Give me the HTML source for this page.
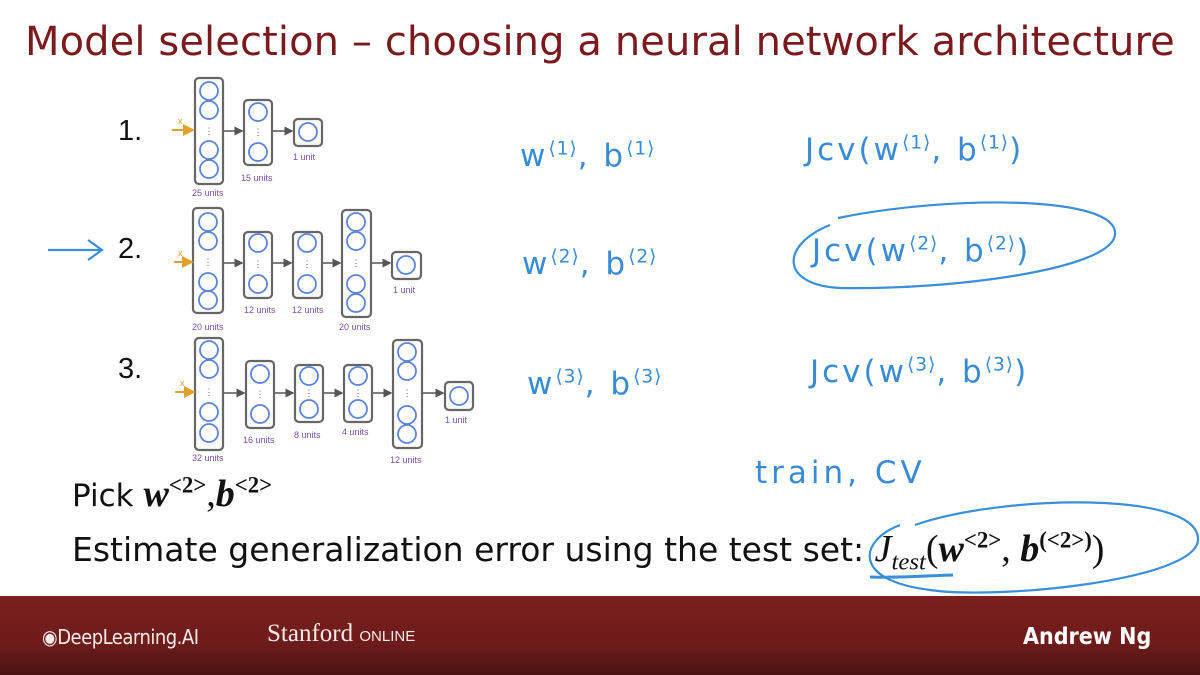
<!DOCTYPE html>
<html><head><meta charset="utf-8"><style>
body{margin:0;width:1200px;height:675px;overflow:hidden;background:#fff;position:relative;font-family:"Liberation Sans",sans-serif}
.a{position:absolute;white-space:nowrap}
.t{left:25px;top:19px;font-size:40px;color:#7a1a1c;font-family:"DejaVu Sans",sans-serif;letter-spacing:0.1px}
.n{font-size:29px;color:#111}
.hw{color:#3a8bd6;font-family:"DejaVu Sans",sans-serif;font-weight:normal;font-size:31px;letter-spacing:3px}
.hw sup{font-family:"DejaVu Sans";font-weight:normal;font-size:60%;letter-spacing:1px}
.m{font-family:"Liberation Serif",serif;font-weight:bold;font-style:italic}
sup{font-size:60%;font-family:"Liberation Serif",serif;font-style:normal;font-weight:bold}
.ft{left:0;top:596px;width:1200px;height:79px;background:linear-gradient(#7a1f1d 0%,#6e1c1a 60%,#4a1414 100%)}
.b{font-family:"DejaVu Sans",sans-serif;font-size:33px;color:#111}
.mt{font-size:38px;font-family:'Liberation Serif',serif}
</style></head><body>
<div class="a t">Model selection – choosing a neural network architecture</div>
<div class="a n" style="left:118px;top:115px">1.</div>
<div class="a n" style="left:118px;top:233px">2.</div>
<div class="a n" style="left:118px;top:353px">3.</div>
<svg class="a" style="left:0;top:0" width="1200" height="600">
<defs><marker id="ar" markerWidth="6" markerHeight="6" refX="5" refY="3" orient="auto"><path d="M0,0L6,3L0,6z" fill="#555"/></marker>
<marker id="ao" markerWidth="6" markerHeight="6" refX="5" refY="3" orient="auto"><path d="M0,0L6,3L0,6z" fill="#e0a030"/></marker></defs>
<g fill="none" stroke="#666" stroke-width="2.2">
<rect x="195" y="78" width="28" height="106" rx="4"/><rect x="244" y="100" width="28" height="65" rx="4"/><rect x="294" y="119" width="28" height="27" rx="4"/>
<rect x="193" y="208" width="30" height="105" rx="4"/><rect x="244" y="232" width="28" height="66" rx="4"/><rect x="293" y="232" width="29" height="66" rx="4"/><rect x="342" y="210" width="29" height="107" rx="4"/><rect x="392" y="252" width="29" height="27" rx="4"/>
<rect x="195" y="338" width="28" height="112" rx="4"/><rect x="246" y="361" width="28" height="67" rx="4"/><rect x="295" y="365" width="28" height="57" rx="4"/><rect x="344" y="365" width="28" height="57" rx="4"/><rect x="393" y="340" width="29" height="108" rx="4"/><rect x="445" y="382" width="28" height="28" rx="4"/>
</g>
<g stroke="#555" stroke-width="1.5" marker-end="url(#ar)">
<line x1="224" y1="131" x2="242" y2="131"/><line x1="273" y1="131" x2="292" y2="131"/>
<line x1="224" y1="263" x2="242" y2="263"/><line x1="273" y1="263" x2="291" y2="263"/><line x1="323" y1="263" x2="340" y2="263"/><line x1="372" y1="263" x2="390" y2="263"/>
<line x1="224" y1="393" x2="244" y2="393"/><line x1="275" y1="393" x2="293" y2="393"/><line x1="324" y1="393" x2="342" y2="393"/><line x1="373" y1="393" x2="391" y2="393"/><line x1="423" y1="393" x2="443" y2="393"/>
</g>
<g stroke="#e0a030" stroke-width="2" marker-end="url(#ao)">
<line x1="172" y1="130" x2="193" y2="130"/><line x1="174" y1="262" x2="192" y2="262"/><line x1="175" y1="392" x2="194" y2="392"/>
</g>
<g fill="#d89a2a" font-size="9" font-family="Liberation Sans"><text x="178" y="124">x</text><text x="178" y="256">x</text><text x="180" y="386">x</text></g>
<g fill="none" stroke="#5b84d8" stroke-width="1.8">
<circle cx="209" cy="91" r="9"/><circle cx="209" cy="110" r="9"/><circle cx="209" cy="150" r="9"/><circle cx="209" cy="169" r="9"/>
<circle cx="258" cy="112" r="9"/><circle cx="258" cy="152" r="9"/><circle cx="308" cy="132" r="9"/>
<circle cx="208" cy="222" r="9"/><circle cx="208" cy="241" r="9"/><circle cx="208" cy="282" r="9"/><circle cx="208" cy="300" r="9"/>
<circle cx="258" cy="243" r="9"/><circle cx="258" cy="284" r="9"/><circle cx="307" cy="243" r="9"/><circle cx="307" cy="284" r="9"/>
<circle cx="356" cy="222" r="9"/><circle cx="356" cy="241" r="9"/><circle cx="356" cy="284" r="9"/><circle cx="356" cy="303" r="9"/><circle cx="406" cy="265" r="9"/>
<circle cx="209" cy="350" r="9"/><circle cx="209" cy="369" r="9"/><circle cx="209" cy="412" r="9"/><circle cx="209" cy="433" r="9"/>
<circle cx="260" cy="374" r="9"/><circle cx="260" cy="414" r="9"/><circle cx="309" cy="376" r="9"/><circle cx="309" cy="409" r="9"/>
<circle cx="358" cy="376" r="9"/><circle cx="358" cy="409" r="9"/>
<circle cx="407" cy="352" r="9"/><circle cx="407" cy="371" r="9"/><circle cx="407" cy="415" r="9"/><circle cx="407" cy="434" r="9"/><circle cx="459" cy="396" r="9"/>
</g>
<g fill="#555" font-size="9" font-family="Liberation Sans" text-anchor="middle"><text x="209" y="134">⋮</text><text x="258" y="135">⋮</text><text x="208" y="265">⋮</text><text x="258" y="267">⋮</text><text x="307" y="267">⋮</text><text x="356" y="266">⋮</text><text x="209" y="395">⋮</text><text x="260" y="397">⋮</text><text x="309" y="396">⋮</text><text x="358" y="396">⋮</text><text x="407" y="396">⋮</text></g>
<g fill="#7a4ea8" font-size="9" font-family="Liberation Sans">
<text x="192" y="196">25 units</text><text x="241" y="181">15 units</text><text x="293" y="160">1 unit</text>
<text x="192" y="330">20 units</text><text x="244" y="313">12 units</text><text x="292" y="313">12 units</text><text x="339" y="330">20 units</text><text x="393" y="293">1 unit</text>
<text x="192" y="461">32 units</text><text x="243" y="443">16 units</text><text x="294" y="438">8 units</text><text x="342" y="435">4 units</text><text x="390" y="463">12 units</text><text x="445" y="423">1 unit</text>
</g>
<g fill="none" stroke="#3b8fd8" stroke-width="2.2">
<path d="M48,250 L100,250 M88,240 L102,250 L88,260"/>
<path d="M838,218 C950,195 1120,195 1115,235 C1110,270 950,290 840,288 C780,285 780,245 830,225"/>
<path d="M915,525 C1000,495 1200,490 1198,540 C1196,580 1000,600 930,590 C850,580 860,540 900,525"/>
<path d="M870,577 C895,578 920,576 953,575" stroke-width="3"/>
</g>
</svg>
<div class="a hw" style="left:520px;top:138px">w<sup>⟨1⟩</sup>, b<sup>⟨1⟩</sup></div>
<div class="a hw" style="left:805px;top:132px">Jcv(w<sup>⟨1⟩</sup>, b<sup>⟨1⟩</sup>)</div>
<div class="a hw" style="left:522px;top:246px">w<sup>⟨2⟩</sup>, b<sup>⟨2⟩</sup></div>
<div class="a hw" style="left:812px;top:233px">Jcv(w<sup>⟨2⟩</sup>, b<sup>⟨2⟩</sup>)</div>
<div class="a hw" style="left:527px;top:366px">w<sup>⟨3⟩</sup>, b<sup>⟨3⟩</sup></div>
<div class="a hw" style="left:810px;top:354px">Jcv(w<sup>⟨3⟩</sup>, b<sup>⟨3⟩</sup>)</div>
<div class="a hw" style="left:755px;top:455px;letter-spacing:4px">train, CV</div>
<div class="a b" style="left:72px;top:472px;font-size:31px">Pick <span class="mt"><span class="m">w</span><sup>&lt;2&gt;</sup>,<span class="m">b</span><sup>&lt;2&gt;</sup></span></div>
<div class="a b" style="left:72px;top:527px">Estimate generalization error using the test set: <span class="mt"><span style="font-style:italic">J<sub style="font-size:65%">test</sub></span>(<span class="m">w</span><sup>&lt;2&gt;</sup>, <span class="m">b</span><sup>(&lt;2&gt;)</sup>)</span></div>
<div class="a ft"></div>
<div class="a" style="left:42px;top:625px;color:#f4eaea;font-size:20px;font-family:'DejaVu Sans Condensed','DejaVu Sans',sans-serif;letter-spacing:-0.5px">◉DeepLearning.AI</div>
<div class="a" style="left:267px;top:620px;color:#f4eaea;font-size:25px;font-family:'Liberation Serif',serif">Stanford <span style="font-family:'Liberation Sans';font-size:15px">ONLINE</span></div>
<div class="a" style="left:1023px;top:624px;color:#fff;font-size:23px;font-weight:bold;font-family:'DejaVu Sans Condensed','DejaVu Sans',sans-serif">Andrew Ng</div>
</body></html>
